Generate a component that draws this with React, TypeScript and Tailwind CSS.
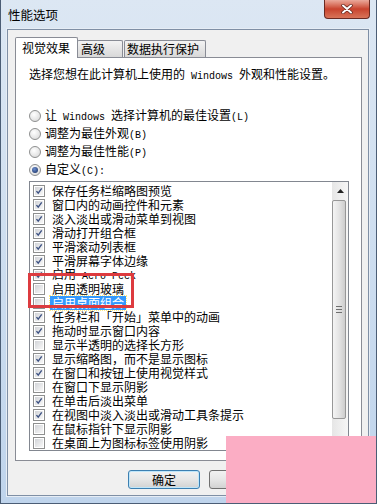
import type { FC, ReactNode } from 'react'

const Mono: FC<{ children: ReactNode }> = ({ children }) => (
  <span className="font-['Liberation_Mono',monospace] text-[10px]">{children}</span>
)

const items: { label: ReactNode; on: boolean; sel?: boolean }[] = [
  { label: '保存任务栏缩略图预览', on: true },
  { label: '窗口内的动画控件和元素', on: true },
  { label: '淡入淡出或滑动菜单到视图', on: true },
  { label: '滑动打开组合框', on: true },
  { label: '平滑滚动列表框', on: true },
  { label: '平滑屏幕字体边缘', on: true },
  { label: <>启用<Mono> Aero Peek</Mono></>, on: true },
  { label: '启用透明玻璃', on: false },
  { label: '启用桌面组合', on: false, sel: true },
  { label: '任务栏和「开始」菜单中的动画', on: true },
  { label: '拖动时显示窗口内容', on: true },
  { label: '显示半透明的选择长方形', on: false },
  { label: '显示缩略图，而不是显示图标', on: true },
  { label: '在窗口和按钮上使用视觉样式', on: true },
  { label: '在窗口下显示阴影', on: false },
  { label: '在单击后淡出菜单', on: true },
  { label: '在视图中淡入淡出或滑动工具条提示', on: true },
  { label: '在鼠标指针下显示阴影', on: false },
  { label: '在桌面上为图标标签使用阴影', on: false },
]

const Radio: FC<{ checked?: boolean; children: ReactNode }> = ({ checked, children }) => (
  <div className="h-[18px] flex items-center gap-[4px] whitespace-nowrap">
    <div className="w-[12px] h-[12px] rounded-full border border-[#8e8f8f] bg-[radial-gradient(circle_at_40%_35%,#ffffff,#d4d4d4)] flex items-center justify-center">
      {checked && <div className="w-[6px] h-[6px] rounded-full bg-[radial-gradient(circle_at_40%_35%,#6c8fd0,#13295a)]" />}
    </div>
    <span>{children}</span>
  </div>
)

const Check: FC<{ on: boolean }> = ({ on }) => (
  <div className="w-[12px] h-[12px] shrink-0 border border-[#8e8f8f] p-px bg-white">
    <div className="w-full h-full bg-gradient-to-br from-[#d2d4d8] to-[#f8f8f8] relative">
      {on && (
        <svg viewBox="0 0 10 10" className="absolute inset-0 w-full h-full">
          <path d="M1.8 5.2 L4 7.6 L8.4 1.8" fill="none" stroke="#3d5283" strokeWidth="1.7" />
        </svg>
      )}
    </div>
  </div>
)

export default function App() {
  return (
    <div className="relative w-[377px] h-[504px] overflow-hidden border-x border-b border-[#4b5d75] bg-gradient-to-b from-[#dce7f3] to-[#bfd4ec] font-['Noto_Sans_CJK_SC',sans-serif] text-[12px] leading-[14px] text-black flex flex-col">
      {/* 标题栏 */}
      <div className="h-[29px] shrink-0 flex items-center pl-[7px] text-[12.5px]">性能选项</div>
      <div className="absolute left-[323px] top-0 w-[46px] h-[19px] rounded-b-[4px] border border-t-0 border-[#6a2a22] bg-gradient-to-b from-[#eaa99b] via-[#c8432e] to-[#d87358] flex items-center justify-center">
        <svg viewBox="0 0 12 10" className="w-[12px] h-[10px]">
          <path d="M2 1.5 L10 8.5 M10 1.5 L2 8.5" stroke="#5b2018" strokeWidth="3.4" strokeLinecap="round" />
          <path d="M2 1.5 L10 8.5 M10 1.5 L2 8.5" stroke="#ffffff" strokeWidth="2" strokeLinecap="round" />
        </svg>
      </div>

      {/* 客户区 */}
      <div className="ml-[6px] mr-[7px] h-[467px] border border-[#7f8fa5] bg-[#f0f0f0] shadow-[0_0_0_1px_#e6edf5] pt-[7px] flex flex-col">
        {/* 选项卡 */}
        <div className="h-[20px] ml-[7px] flex items-end">
          <div className="relative z-10 w-[63px] h-[21px] -mb-px bg-white border border-b-0 border-[#898c95] rounded-t-[2px] pl-[6px] flex items-center">视觉效果</div>
          <div className="-ml-px w-[46px] h-[17px] border border-b-0 border-[#898c95] rounded-t-[2px] bg-gradient-to-b from-[#f3f3f3] to-[#d8d8d8] pl-[3px] flex items-center">高级</div>
          <div className="ml-px w-[82px] h-[17px] border border-b-0 border-[#898c95] rounded-t-[2px] bg-gradient-to-b from-[#f3f3f3] to-[#d8d8d8] pl-[2px] flex items-center">数据执行保护</div>
        </div>

        <div className="ml-[7px] w-[347px] h-[404px] border border-[#898c95] bg-white pl-[13px] pt-[9px]">
          <p className="whitespace-nowrap">选择您想在此计算机上使用的<Mono> Windows </Mono>外观和性能设置。</p>

          <div className="mt-[23px]">
            <Radio>让<Mono> Windows </Mono>选择计算机的最佳设置<Mono>(L)</Mono></Radio>
            <Radio>调整为最佳外观<Mono>(B)</Mono></Radio>
            <Radio>调整为最佳性能<Mono>(P)</Mono></Radio>
            <Radio checked>自定义<Mono>(C):</Mono></Radio>
          </div>

          {/* 列表框 */}
          <div className="mt-[2px] w-[320px] h-[270px] border border-[#828790] flex">
            <div className="flex-1 overflow-hidden pt-[2px] pl-[3px]">
              {items.map((it, i) => (
                <div key={i} className="h-[14px] flex items-center gap-[5px] whitespace-nowrap">
                  <Check on={it.on} />
                  <span className={it.sel ? 'px-[2px] bg-[#3399ff] text-white outline outline-1 outline-dotted outline-[#ffea80]' : 'px-[2px]'}>{it.label}</span>
                </div>
              ))}
            </div>
            {/* 滚动条 */}
            <div className="w-[16px] flex flex-col bg-gradient-to-r from-[#e6e6e6] to-[#f6f6f6]">
              <div className="h-[17px] flex items-center justify-center">
                <svg viewBox="0 0 7 4" className="w-[7px] h-[4px]"><path d="M0 4 L3.5 0 L7 4 Z" fill="#222" /></svg>
              </div>
              <div className="mt-[1px] w-[14px] h-[219px] rounded-[2px] border border-[#979797] bg-gradient-to-r from-[#f4f4f4] via-[#e4e4e4] to-[#cdcdcd] flex flex-col items-center justify-center gap-[2px]">
                <div className="w-[6px] h-px bg-[#6f6f6f]" />
                <div className="w-[6px] h-px bg-[#6f6f6f]" />
                <div className="w-[6px] h-px bg-[#6f6f6f]" />
              </div>
              <div className="flex-1" />
              <div className="h-[17px] flex items-center justify-center">
                <svg viewBox="0 0 7 4" className="w-[7px] h-[4px]"><path d="M0 0 L3.5 4 L7 0 Z" fill="#222" /></svg>
              </div>
            </div>
          </div>
        </div>

        {/* 按钮 */}
        <div className="mt-[9px] pr-[6px] flex justify-end gap-[9px]">
          <button className="w-[72px] h-[19px] rounded-[3px] border border-[#3c7fb1] bg-gradient-to-b from-[#f2f2f2] via-[#e6e6e6] to-[#d2d2d2] shadow-[inset_0_0_0_1px_#bfe6fa]">确定</button>
          <button className="w-[72px] h-[19px] rounded-[3px] border border-[#707070] bg-gradient-to-b from-[#f2f2f2] via-[#e6e6e6] to-[#d2d2d2]">取消</button>
          <button className="w-[72px] h-[19px] rounded-[3px] border border-[#707070] bg-gradient-to-b from-[#f2f2f2] via-[#e6e6e6] to-[#d2d2d2]">应用(A)</button>
        </div>
      </div>

      {/* 红色标注框 */}
      <div className="absolute left-[27px] top-[273px] w-[106px] h-[35px] border-[3px] border-[#dd3b3f]" />
      {/* 水印遮挡 */}
      <div className="absolute left-[225px] top-[436px] w-[152px] h-[68px] bg-[#fbadc4]" />
    </div>
  )
}
